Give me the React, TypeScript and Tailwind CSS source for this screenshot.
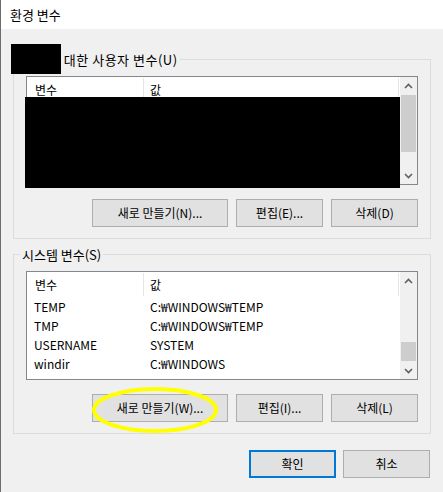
import React from 'react';

const ChevronUp = () => (
  <svg width="9" height="6" viewBox="0 0 9 6">
    <path d="M1 5 L4.5 1.5 L8 5" fill="none" stroke="#606060" strokeWidth="1.6" />
  </svg>
);

const ChevronDown = () => (
  <svg width="9" height="6" viewBox="0 0 9 6">
    <path d="M1 1 L4.5 4.5 L8 1" fill="none" stroke="#606060" strokeWidth="1.6" />
  </svg>
);

const WinButton: React.FC<{ label: string; width: string; focused?: boolean }> = ({ label, width, focused }) => (
  <button
    className={`${width} h-[28px] flex items-center justify-center bg-[#e1e1e1] text-black ${
      focused ? 'border-2 border-[#0078d7]' : 'border border-[#adadad]'
    }`}
  >
    {label}
  </button>
);

type Row = { name: string; value: string };

const ListHeader = () => (
  <div className="flex h-[25px] bg-white">
    <div className="w-[116px] pl-[8px] flex items-center">변수</div>
    <div className="w-px my-[1px] bg-[#e5e5e5]" />
    <div className="flex-1 pl-[6px] flex items-center">값</div>
    <div className="w-px my-[1px] bg-[#e5e5e5]" />
    <div className="w-px" />
  </div>
);

const VarList: React.FC<{ rows: Row[]; thumb: 'top' | 'bottom' }> = ({ rows, thumb }) => (
  <div className="w-[392px] h-[109px] border border-[#828790] bg-white flex">
    <div className="flex-1 flex flex-col overflow-hidden">
      <ListHeader />
      {rows.map((r) => (
        <div key={r.name} className="flex h-[19px] items-center">
          <div className="w-[117px] pl-[7px]">{r.name}</div>
          <div className="pl-[6px]">{r.value}</div>
        </div>
      ))}
    </div>
    {/* scrollbar */}
    <div className="w-[17px] bg-[#f0f0f0] flex flex-col">
      <div className="h-[17px] flex items-center justify-center">
        <ChevronUp />
      </div>
      {thumb === 'top' ? (
        <>
          <div className="mt-[1px] mx-[1px] h-[57px] bg-[#cdcdcd]" />
          <div className="flex-1" />
        </>
      ) : (
        <>
          <div className="flex-1" />
          <div className="mx-[1px] h-[19px] mb-[1px] bg-[#cdcdcd]" />
        </>
      )}
      <div className="h-[17px] flex items-center justify-center">
        <ChevronDown />
      </div>
    </div>
  </div>
);

const GroupBox: React.FC<{ label: React.ReactNode; labelClass: string; children: React.ReactNode }> = ({
  label,
  labelClass,
  children,
}) => (
  <div className="relative w-[418px] h-[180px] border border-[#dcdcdc] pt-[16px] pl-[12px]">
    <div className={`absolute top-[-8px] ${labelClass} px-[2px] bg-[#f0f0f0] text-[13px] leading-[16px]`}>{label}</div>
    {children}
  </div>
);

const systemRows: Row[] = [
  { name: 'TEMP', value: 'C:₩WINDOWS₩TEMP' },
  { name: 'TMP', value: 'C:₩WINDOWS₩TEMP' },
  { name: 'USERNAME', value: 'SYSTEM' },
  { name: 'windir', value: 'C:₩WINDOWS' },
];

export default function App() {
  return (
    <div className="relative w-[443px] h-[492px] overflow-hidden border-l border-[#6d6d6d] bg-[#f0f0f0] text-[12px] leading-[16px] text-black font-['Noto_Sans_CJK_KR',sans-serif]">
      <div className="h-[29px] bg-white pl-[9px] pt-[1px] flex items-center text-[13px]">환경 변수</div>

      <div className="pl-[12px] pt-[30px]">
        <GroupBox label="에 대한 사용자 변수(U)" labelClass="left-[32px] tracking-[0.5px]">
          <VarList rows={[]} thumb="top" />
          <div className="w-[392px] mt-[14px] flex justify-end gap-[8px]">
            <WinButton label="새로 만들기(N)..." width="w-[136px]" />
            <WinButton label="편집(E)..." width="w-[87px]" />
            <WinButton label="삭제(D)" width="w-[87px]" />
          </div>
        </GroupBox>

        <div className="mt-[15px]">
          <GroupBox label="시스템 변수(S)" labelClass="left-[6px]">
            <VarList rows={systemRows} thumb="bottom" />
            <div className="w-[392px] mt-[14px] flex justify-end gap-[8px]">
              <WinButton label="새로 만들기(W)..." width="w-[136px]" />
              <WinButton label="편집(I)..." width="w-[87px]" />
              <WinButton label="삭제(L)" width="w-[87px]" />
            </div>
          </GroupBox>
        </div>

        <div className="w-[418px] pr-[1px] mt-[16px] flex justify-end gap-[7px]">
          <WinButton label="확인" width="w-[87px]" focused />
          <WinButton label="취소" width="w-[87px]" />
        </div>
      </div>

      {/* redactions */}
      <div className="absolute left-[10px] top-[44px] w-[50px] h-[30px] bg-black" />
      <div className="absolute left-[24px] top-[97px] w-[375px] h-[91px] bg-black" />

      {/* yellow highlight */}
      <svg className="absolute left-[91px] top-[387px]" width="126" height="46" viewBox="0 0 126 46">
        <ellipse cx="63" cy="23" rx="61" ry="21" fill="none" stroke="#ffff00" strokeWidth="4" />
      </svg>
    </div>
  );
}
